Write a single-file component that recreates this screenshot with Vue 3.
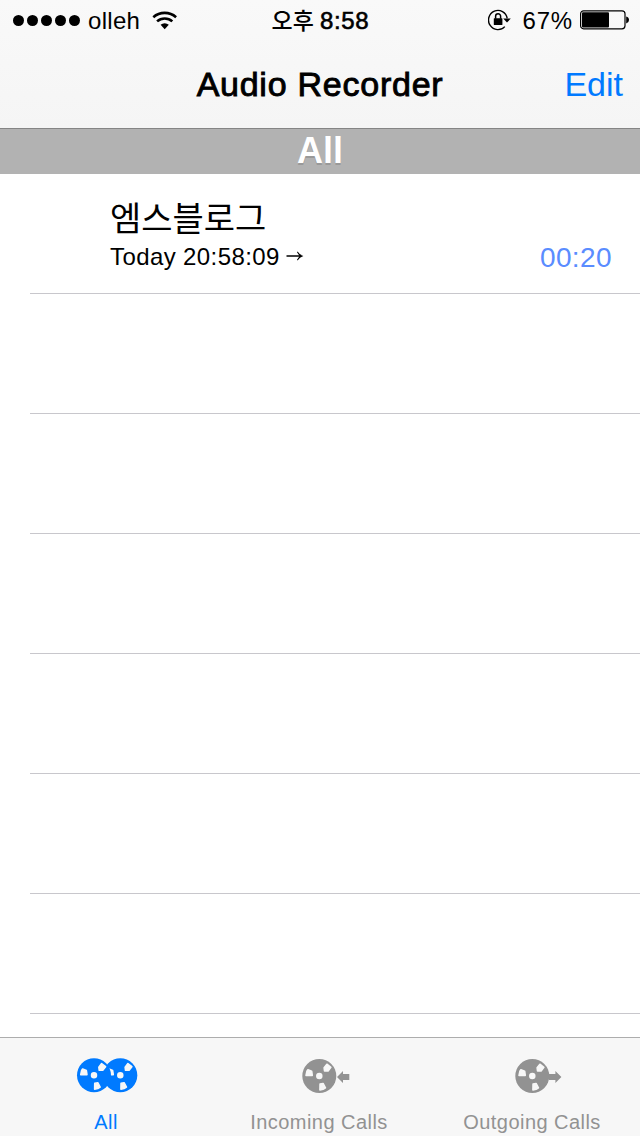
<script setup>
const emptyRows = 6
const tabs = [
  { id: 'all', label: 'All', active: true },
  { id: 'in', label: 'Incoming Calls', active: false },
  { id: 'out', label: 'Outgoing Calls', active: false },
]
</script>

<template>
  <div class="screen">
    <svg class="defs" width="0" height="0" aria-hidden="true">
      <symbol id="disc" viewBox="-18 -18 36 36" overflow="visible">
        <circle r="17" fill="currentColor" />
        <g fill="#f7f7f7" stroke="#f7f7f7" stroke-width="1.5" stroke-linejoin="round">
          <circle r="2.5" />
          <path d="M-13.3-.6 L-12.4-4.8 L-11.4-6.3 L-7.6-4.8 L-7-.6z" />
          <path d="M4.8-8.2 L7.6-11.8 L11.6-8.6 L8.8-5 L5.2-5z" />
          <path d="M.7 8 L3.8 7.4 L6.2 11.9 L3.8 13.3 L.6 13.9z" />
        </g>
      </symbol>
    </svg>

    <header class="top">
      <div class="status">
        <div class="side left">
          <div class="signal"><i v-for="n in 5" :key="n"></i></div>
          <span class="carrier">olleh</span>
          <svg class="wifi" width="26" height="19" viewBox="0 0 26 19">
            <g fill="none" stroke="#000" stroke-width="2.6">
              <path d="M1.3 6.2 A17.2 17.2 0 0 1 24.1 6.2" />
              <path d="M5.1 10.4 A11.2 11.2 0 0 1 20.3 10.4" />
            </g>
            <path d="M8.6 13.8 A6.2 6.2 0 0 1 16.8 13.8 L12.7 18.2z" />
          </svg>
        </div>
        <div class="clock"><span class="ampm">오후</span><span class="time">8:58</span></div>
        <div class="side right">
          <svg class="lock" width="24" height="22" viewBox="0 0 24 22">
            <path d="M19.2 9.4 A9.4 9.6 0 1 0 16.8 17.6" fill="none" stroke="#000" stroke-width="1.4" />
            <path d="M15.2 9.6 H22.8 L19 13.6z" />
            <rect x="5.8" y="9.2" width="8.6" height="6.8" rx=".6" />
            <path d="M7.6 9.7 V7.2 A2.5 2.5 0 0 1 12.6 7.2 V9.7" fill="none" stroke="#000" stroke-width="1.5" />
          </svg>
          <span class="percent">67%</span>
          <svg class="battery" width="50" height="20" viewBox="0 0 50 20">
            <rect x=".6" y=".8" width="44.4" height="18" rx="3" fill="none" stroke="#000" stroke-width="1.2" />
            <rect x="2" y="2.2" width="27" height="15.2" rx="1" />
            <path d="M46.2 6.4 Q49 7.2 49 9.9 Q49 12.6 46.2 13.4z" />
          </svg>
        </div>
      </div>
      <div class="nav">
        <span></span>
        <h1>Audio Recorder</h1>
        <a class="edit">Edit</a>
      </div>
    </header>

    <div class="section">All</div>

    <main class="list">
      <div class="row">
        <div class="info">
          <div class="name">엠스블로그</div>
          <div class="meta">
            <span>Today 20:58:09</span>
            <svg width="18" height="12" viewBox="0 0 18 12">
              <path d="M.5 6 H15" fill="none" stroke="#000" stroke-width="1.5" />
              <path d="M11.6 1.4 Q13.6 4.8 17.4 6 Q13.6 7.2 11.6 10.6 L11 9.8 L13.6 6 L11 2.2z" />
            </svg>
          </div>
        </div>
        <span class="duration">00:20</span>
      </div>
      <div v-for="n in emptyRows" :key="n" class="row"></div>
    </main>

    <nav class="tabs">
      <div v-for="tab in tabs" :key="tab.id" class="tab" :class="{ active: tab.active }">
        <svg width="100" height="40" viewBox="0 0 100 40">
          <template v-if="tab.id === 'all'">
            <use href="#disc" x="45.3" y="1.3" width="36" height="36" />
            <use href="#disc" x="19" y="1.3" width="36" height="36" />
          </template>
          <template v-else>
            <use href="#disc" x="31.3" y="2" width="36" height="36" />
            <path v-if="tab.id === 'in'" fill="currentColor" d="M67 21 L73 15 V18 H79.3 V24 H73 V27z" />
            <path v-else fill="currentColor" d="M66 18 H72.4 V15 L78.4 21 L72.4 27 V24 H66z" />
          </template>
        </svg>
        <span class="label">{{ tab.label }}</span>
      </div>
    </nav>
  </div>
</template>

<style>
body {
  margin: 0;
}
</style>

<style scoped>
.screen {
  width: 640px;
  height: 1136px;
  display: flex;
  flex-direction: column;
  overflow: hidden;
  background: #fff;
  color: #000;
  font-family: "Liberation Sans", "Noto Sans CJK KR", sans-serif;
}
.defs {
  position: absolute;
}
.top {
  height: 128px;
  flex: none;
  background: linear-gradient(#f9f9f9, #f5f5f5);
}
.status {
  height: 40px;
  display: grid;
  grid-template-columns: 1fr auto 1fr;
  align-items: center;
  line-height: 40px;
}
.side {
  height: 40px;
  display: flex;
  align-items: center;
}
.left {
  padding-left: 13px;
}
.signal {
  display: flex;
  gap: 3px;
}
.signal i {
  width: 11px;
  height: 11px;
  border-radius: 50%;
  background: #000;
}
.carrier {
  margin-left: 8px;
  padding-top: 2px;
  font-size: 24px;
  letter-spacing: 0.3px;
}
.wifi {
  margin-left: 12px;
}
.clock {
  height: 40px;
  display: flex;
  padding-left: 1px;
  gap: 6px;
  -webkit-text-stroke: 0.6px #000;
}
.ampm {
  font: 500 23px/38px "Noto Sans CJK KR", sans-serif;
  -webkit-text-stroke: 0;
}
.time {
  padding-top: 1px;
  font-size: 24px;
  letter-spacing: 0.7px;
}
.right {
  justify-content: flex-end;
  padding-right: 10px;
}
.percent {
  margin: 0 7px 0 11px;
  padding-top: 2px;
  font-size: 24px;
  letter-spacing: 0.8px;
}
.nav {
  height: 88px;
  display: grid;
  grid-template-columns: 1fr auto 1fr;
  line-height: 88px;
}
h1 {
  margin: 0;
  font-size: 34px;
  font-weight: 400;
  letter-spacing: 0.75px;
  -webkit-text-stroke: 0.9px #000;
}
.edit {
  justify-self: end;
  padding-right: 17px;
  font-size: 34px;
  color: #007aff;
}
.section {
  box-sizing: border-box;
  height: 46px;
  flex: none;
  border-top: 1px solid #858585;
  background: #b2b2b2;
  color: #fff;
  text-align: center;
  font-size: 36px;
  font-weight: 700;
  line-height: 44px;
  text-shadow: 0 2px 0 #999;
}
.list {
  flex: 1;
  min-height: 0;
  overflow: hidden;
}
.row {
  box-sizing: border-box;
  height: 120px;
  margin-left: 30px;
  padding: 21px 28px 0 80px;
  border-bottom: 1px solid #c8c7cc;
  display: flex;
  justify-content: space-between;
}
.name {
  font: 400 34px/44px "Noto Sans CJK KR", sans-serif;
}
.meta {
  display: flex;
  align-items: center;
  gap: 6px;
  padding-top: 1px;
  font-size: 24px;
  line-height: 34px;
  letter-spacing: 0.4px;
}
.meta svg {
  margin-bottom: 3px;
}
.duration {
  padding-top: 45px;
  font-size: 28px;
  line-height: 36px;
  letter-spacing: 0.4px;
  color: #5a8cff;
}
.tabs {
  box-sizing: border-box;
  height: 99px;
  flex: none;
  display: grid;
  grid-template-columns: repeat(3, 213px);
  border-top: 1px solid #adadad;
  background: #f7f7f7;
}
.tab {
  display: flex;
  flex-direction: column;
  align-items: center;
  padding-top: 18px;
  color: #929292;
}
.tab.active {
  color: #007aff;
}
.label {
  margin-top: 14px;
  margin-right: 1px;
  font-size: 20px;
  line-height: 24px;
  letter-spacing: 0.45px;
}
</style>
